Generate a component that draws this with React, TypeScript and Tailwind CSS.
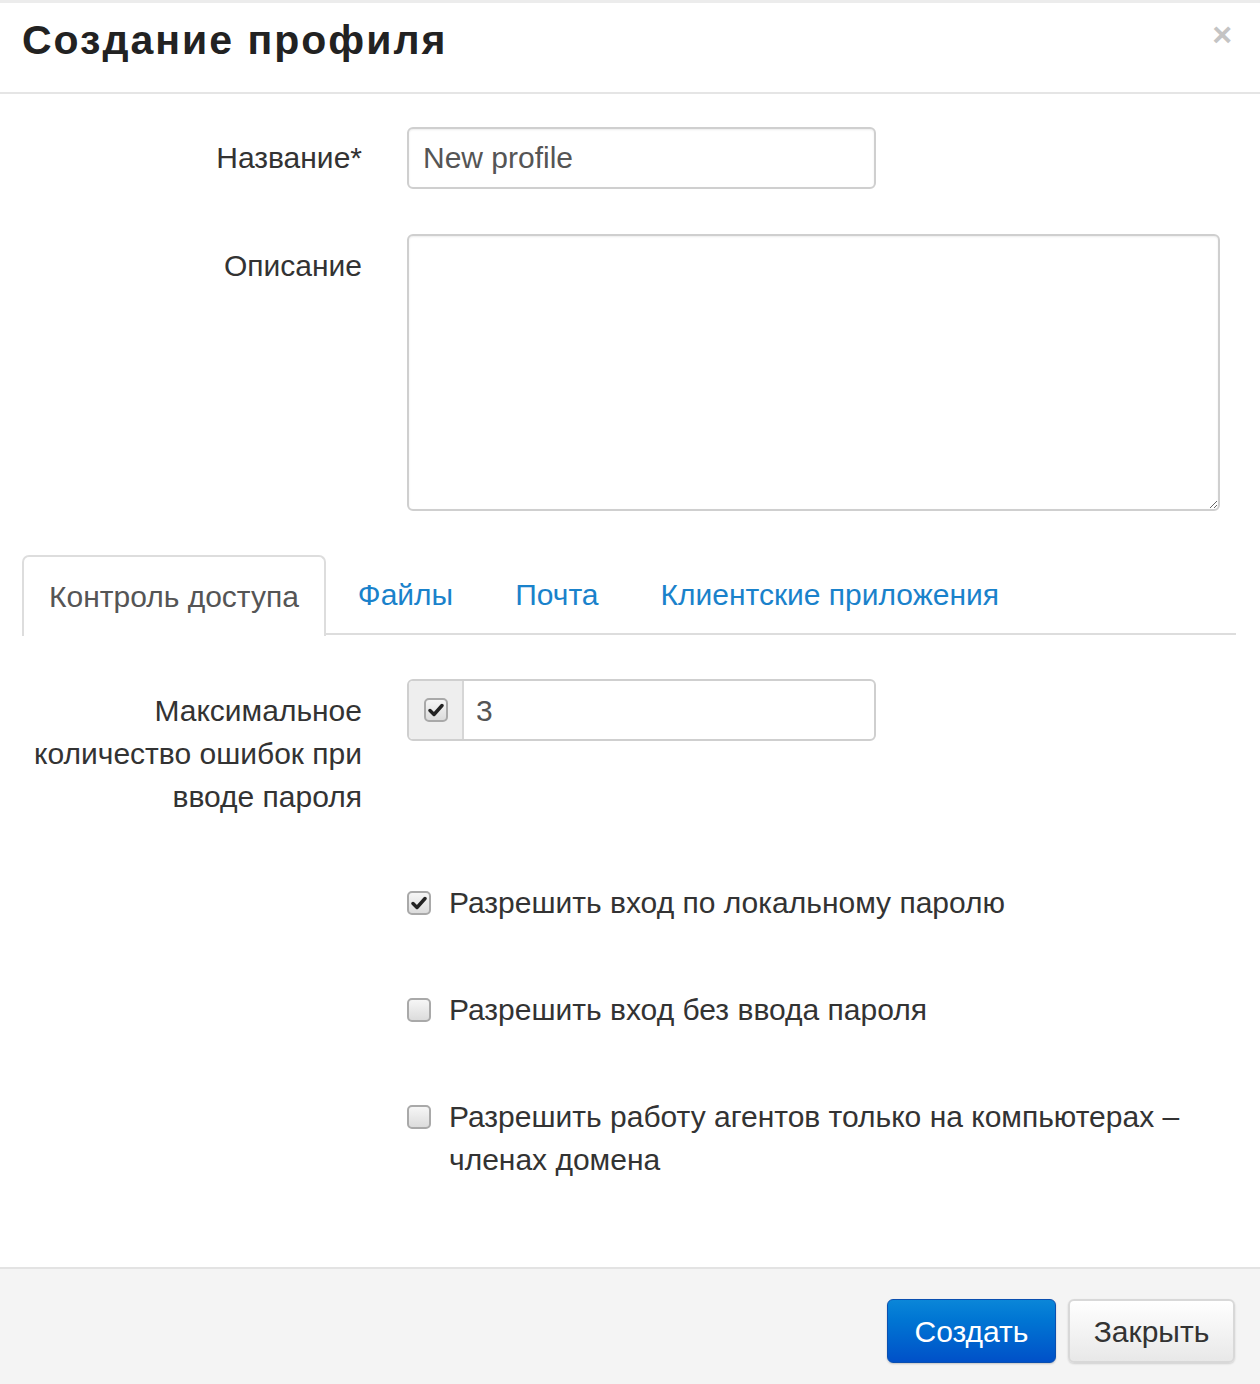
import { useState } from 'react';

const font = { fontFamily: '"Liberation Sans", Arial, sans-serif' };

function Check({ checked }: { checked: boolean }) {
  return (
    <span className="flex h-[24px] w-[24px] shrink-0 items-center justify-center rounded-[5px] border-2 border-[#a9a9a9] bg-gradient-to-b from-[#f6f6f6] to-[#dcdcdc]">
      {checked && (
        <svg width="16" height="14" viewBox="0 0 16 14">
          <path d="M2 7.5 L6 11.5 L14 2.5" fill="none" stroke="#222" strokeWidth="3.4" strokeLinecap="round" strokeLinejoin="round" />
        </svg>
      )}
    </span>
  );
}

export default function App() {
  const [tab, setTab] = useState(0);
  const tabs = ['Контроль доступа', 'Файлы', 'Почта', 'Клиентские приложения'];

  return (
    <div style={font} className="flex h-[1384px] w-[1260px] flex-col overflow-hidden bg-white text-[30px] text-[#333]">
      {/* Header */}
      <div className="flex h-[94px] items-start justify-between border-t-[3px] border-b-2 border-t-[#ececec] border-b-[#e5e5e5] pl-[22px] pr-[28px]">
        <h3 className="mt-[13px] text-[41px] font-bold leading-[48px] tracking-[2px] text-[#222]">Создание профиля</h3>
        <span className="mt-[14px] text-[34px] font-bold leading-[34px] text-[#c4c4c4]">×</span>
      </div>

      {/* Body */}
      <div className="flex flex-1 flex-col pl-[22px] pr-[24px] pt-[33px]">
        <div className="grid grid-cols-[340px_1fr] gap-x-[45px]">
          <label className="pt-[9px] text-right leading-[43px]">Название*</label>
          <input
            defaultValue="New profile"
            className="h-[62px] w-[469px] rounded-[6px] border-2 border-[#cfcfcf] px-[14px] text-[30px] text-[#555] shadow-[inset_0_1px_2px_rgba(0,0,0,0.08)] outline-none"
          />

          <label className="mt-[45px] pt-[10px] text-right leading-[43px]">Описание</label>
          <textarea className="mt-[45px] h-[277px] w-[813px] rounded-[6px] border-2 border-[#cfcfcf] px-[14px] py-[10px] text-[30px] shadow-[inset_0_1px_2px_rgba(0,0,0,0.08)] outline-none" />
        </div>

        {/* Tabs */}
        <div className="mt-[44px] flex h-[80px] border-b-2 border-[#dddddd]">
          {tabs.map((t, i) => (
            <button
              key={t}
              onClick={() => setTab(i)}
              className={
                i === tab
                  ? '-mb-[2px] mr-[2px] h-[81px] rounded-t-[7px] border-2 border-b-0 border-[#dddddd] bg-white px-[25px] text-[30px] text-[#555]'
                  : 'mr-[2px] h-[78px] px-[30px] text-[30px] text-[#1a82cb]'
              }
            >
              {t}
            </button>
          ))}
        </div>

        <div className="mt-[44px] grid grid-cols-[340px_1fr] gap-x-[45px]">
          <label className="pt-[10px] text-right leading-[43px]">
            Максимальное
            <br />
            количество ошибок при
            <br />
            вводе пароля
          </label>
          <div className="flex h-[62px] w-[469px] overflow-hidden rounded-[6px] border-2 border-[#cfcfcf]">
            <div className="flex w-[57px] items-center justify-center border-r-2 border-[#d6d6d6] bg-[#eeeeee]">
              <Check checked />
            </div>
            <input defaultValue="3" className="flex-1 px-[12px] text-[30px] text-[#555] outline-none" />
          </div>
        </div>

        <div className="ml-[385px] mt-[63px] flex flex-col gap-[64px]">
          <label className="flex items-start gap-[18px] leading-[43px]">
            <span className="mt-[10px]"><Check checked /></span>
            Разрешить вход по локальному паролю
          </label>
          <label className="flex items-start gap-[18px] leading-[43px]">
            <span className="mt-[10px]"><Check checked={false} /></span>
            Разрешить вход без ввода пароля
          </label>
          <label className="flex items-start gap-[18px] leading-[43px]">
            <span className="mt-[10px]"><Check checked={false} /></span>
            <span>
              Разрешить работу агентов только на компьютерах –<br />
              членах домена
            </span>
          </label>
        </div>
      </div>

      {/* Footer */}
      <div className="flex h-[117px] items-start justify-end gap-[12px] border-t-2 border-[#e3e3e3] bg-[#f4f4f4] pr-[25px] pt-[30px]">
        <button className="h-[64px] w-[169px] rounded-[6px] border border-[#0a4fb0] bg-gradient-to-b from-[#0b86d8] to-[#0050c8] text-[30px] text-white shadow-[0_1px_2px_rgba(0,0,0,0.2)]">
          Создать
        </button>
        <button className="h-[64px] w-[167px] rounded-[6px] border-2 border-[#d8d8d8] bg-gradient-to-b from-white to-[#e8e8e8] text-[30px] text-[#333] shadow-[0_1px_2px_rgba(0,0,0,0.15)]">
          Закрыть
        </button>
      </div>
    </div>
  );
}
